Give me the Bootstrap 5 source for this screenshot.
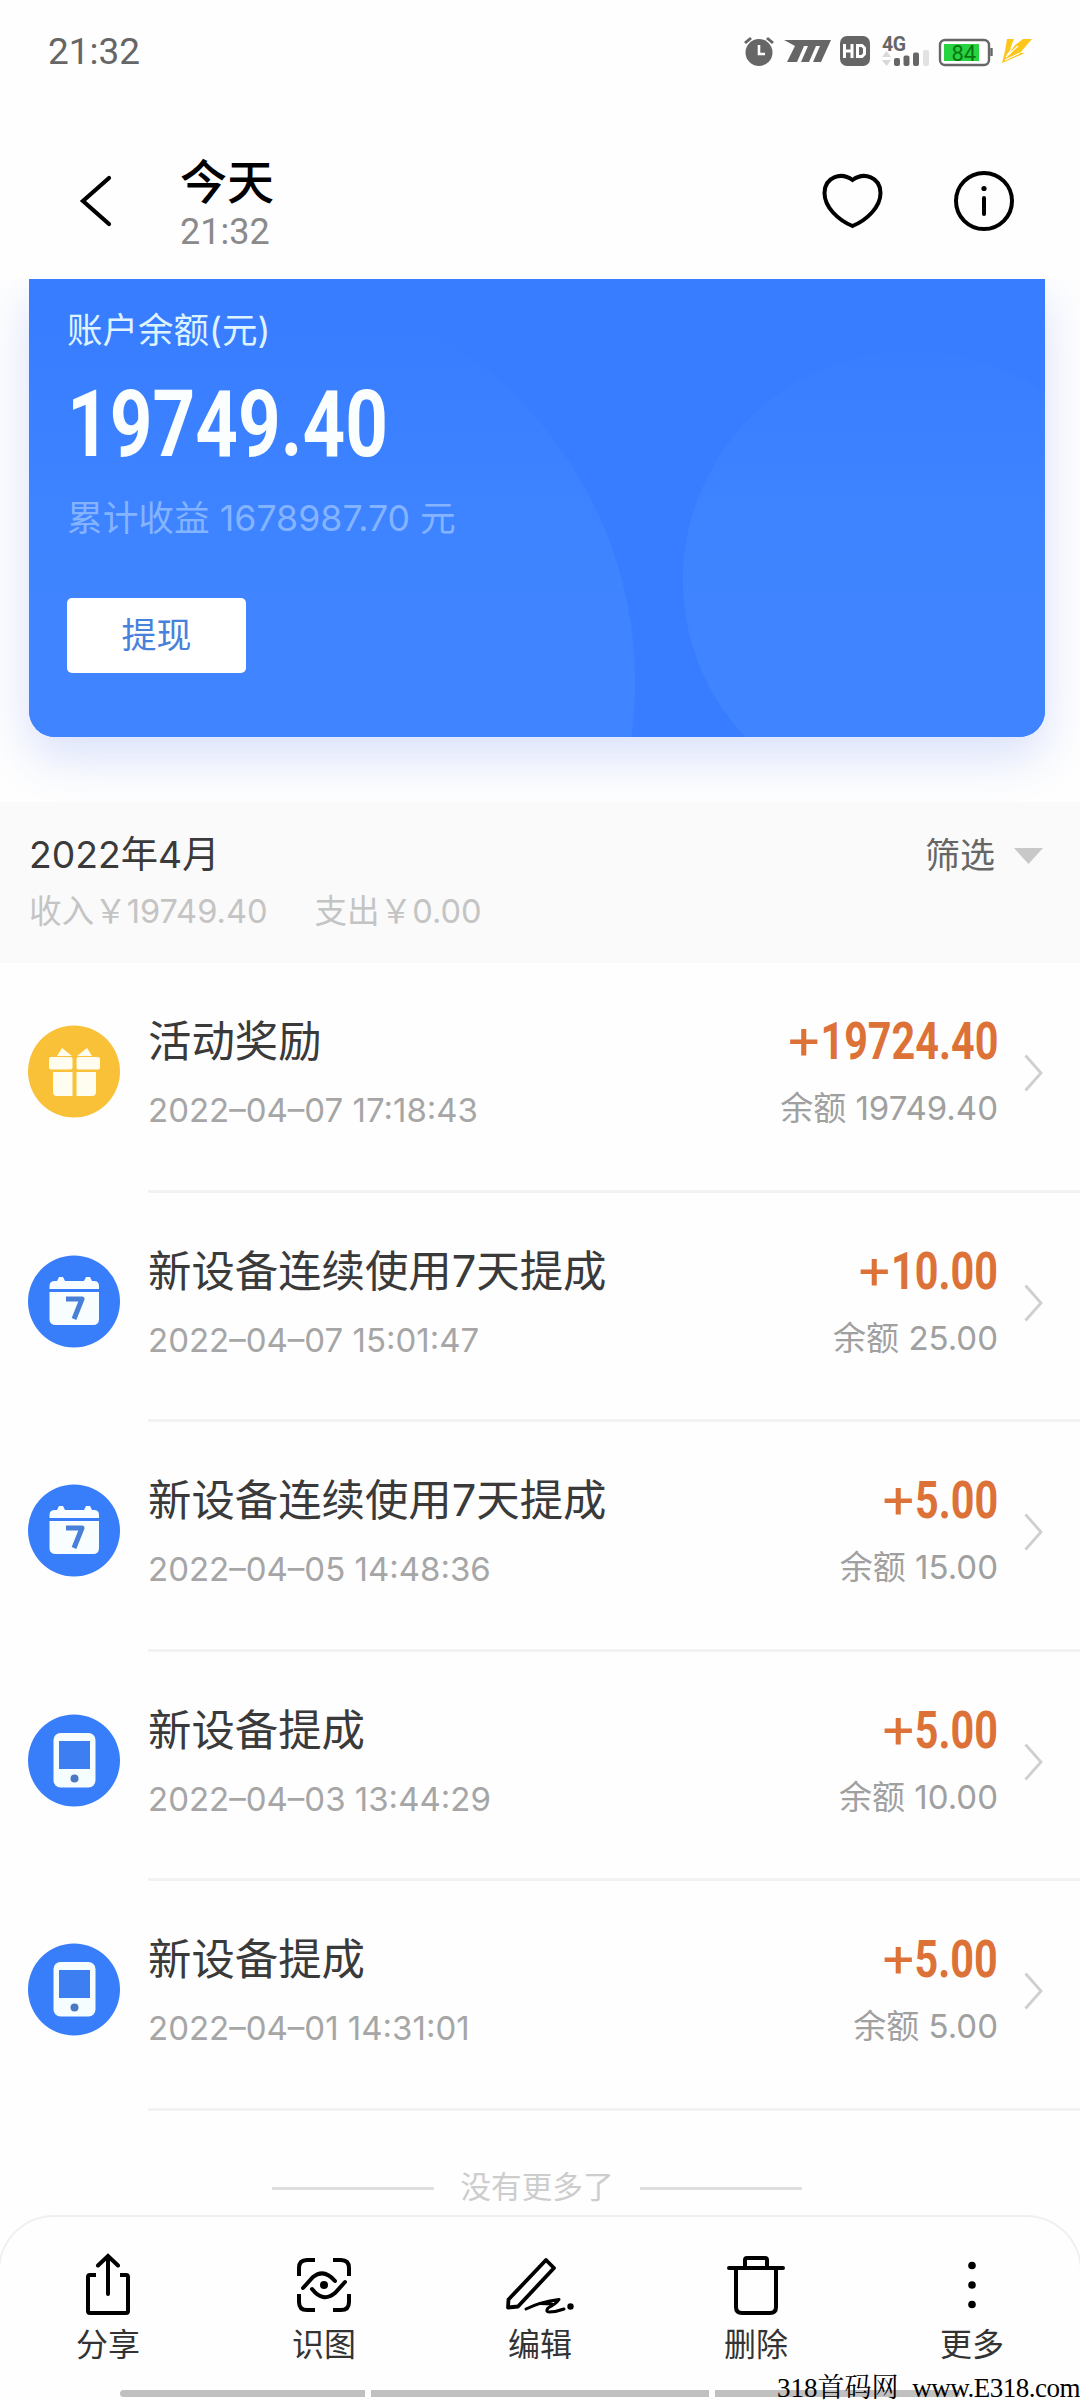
<!DOCTYPE html>
<html lang="zh-CN">
<head>
<meta charset="utf-8">
<meta name="viewport" content="width=device-width, initial-scale=1">
<title>今天 21:32</title>
<link href="https://cdn.jsdelivr.net/npm/bootstrap@5.3.0/dist/css/bootstrap.min.css" rel="stylesheet">
<style>
  body { width: 1080px; height: 2400px; overflow: hidden; background: #fefefe; font-family: Inter, "Noto Sans CJK SC", sans-serif; line-height: 1; }
  svg { display: block; flex: none; }
  .text-line { white-space: nowrap; line-height: 1; }
  .status { height: 102px; padding: 0 47px 0 48px; }
  .clock { font: 400 37px/1 Roboto, sans-serif; color: #666; }
  .topbar { height: 177px; padding: 0 65px 0 79px; }
  .back { margin-top: 73px; }
  .heading { padding: 56px 0 0 67px; gap: 9px; }
  .actions { margin-top: 67px; }
  .day { font-size: 47px; font-weight: 500; color: #000; }
  .day-time { font: 400 36px/1 Roboto, sans-serif; color: #8a8a8a; }
  .viewer { height: 523px; overflow: hidden; padding: 0 35px 0 29px; }
  .balance { position: relative; height: 458px; border-radius: 0 0 26px 26px; background: #387dff; box-shadow: 0 20px 48px rgba(70,110,240,.20); padding: 0 38px; }
  .balance > svg { position: absolute; left: 0; top: 0; border-radius: 0 0 26px 26px; }
  .balance > div { position: relative; }
  .bal-label { font-size: 35.5px; color: #dff3ff; padding-top: 34px; }
  .bal-num { font: 700 92px/1 Roboto, sans-serif; color: #fafeff; transform-origin: 0 50%; transform: scaleX(.81); margin-top: 30px; }
  .bal-total { font-size: 35.7px; color: #84b3ff; margin-top: 30px; }
  .bal-btn { width: 179px; height: 75px; border-radius: 5px; background: #fefffe; color: #4881dc; font-size: 35px; margin-top: 62px; border: 0; }
  .month { height: 161px; background: #fafafa; padding: 34px 37px 0 29px; }
  .month-name { font-size: 37.3px; color: #3a3a3a; }
  .month-sum { font-size: 32.600px; color: #c4c4c4; gap: 47px; margin-top: 22px; }
  .filter { font-size: 35px; color: #666; gap: 19px; padding-top: 2px; }
  .entry { height: 229.5px; padding-left: 28px; }
  .entry-icon { margin: 62px 28px 0 0; }
  .entry-body { height: 229.5px; border-bottom: 3px solid #f2f2f2; padding: 56px 37px 0 0; }
  .entry-name { font-size: 43.4px; color: #3a3a3a; padding-top: 1px; }
  .entry-date { font-size: 33px; color: #a6a6a6; margin-top: 31px; }
  .amount { font: 700 52px/1 Roboto, sans-serif; color: #dd7238; transform-origin: 100% 50%; transform: scaleX(.795); margin-top: -3px; }
  .amount span { display: inline-block; font-weight: 400; transform-origin: 100% 65%; transform: scaleX(1.35); margin-right: 1px; }
  .remain { font-size: 33px; color: #a0a0a0; margin-top: 24px; }
  .next { margin: 35px 0 0 26px; }
  .finish { height: 104px; gap: 27px; padding-top: 52px; padding-right: 6px; color: #cdcdcd; font-size: 30.6px; }
  .finish i { width: 162px; height: 3px; background: #dedede; margin-top: 24px; }
  .finish span { padding-top: 9px; }
  .toolbar { width: 1084px; height: 186px; border: 2px solid #f0f0f0; border-bottom: 0; border-radius: 56px 56px 0 0; background: #fefefe; margin-left: -2px; }
  .tool { width: 216px; font-size: 32px; color: #333; padding-top: 35px; gap: 11px; }
  .homebar { position: absolute; left: 120px; top: 2390px; gap: 6px; }
  .homebar i { height: 7px; background: #c0c0c0; }
  .stamp { position: absolute; left: 777px; top: 2375px; font: 27px/1 "Liberation Serif", "Noto Serif CJK SC", "Noto Sans CJK SC", serif; color: #000; }
  .stamp span { letter-spacing: -.5px; margin-left: 7px; }
</style>
</head>
<body class="position-relative">
<header>
  <div class="status d-flex align-items-center justify-content-between">
    <div class="clock text-line">21:32</div>
    <svg width="290" height="36" viewBox="743 33 290 36">
      <g fill="#666"><circle cx="759" cy="52.500" r="13.500"/><path d="M744 42l6-5 2 2-6 5zM766 39l2-2 6 5-2 2z"/>
      <path d="M784 40H831L821 62H813L820 46H816L809 62H801L808 46H804L797 62H787L795 46z"/>
      <rect x="840" y="36" width="30" height="30" rx="7"/></g>
      <path d="M759 45V54H765" fill="none" stroke="#fff" stroke-width="2.600"/>
      <path d="M844.500 44V58M852 44V58M844.500 51H852M857.500 45.500V56.500H862L864.500 54V48L862 45.500Z" fill="none" stroke="#fff" stroke-width="3"/>
      <text x="882" y="50.500" font-family="Roboto" font-weight="700" font-size="19.500" fill="#666" textLength="24">4G</text>
      <path d="M882 57l4.500-6 4.500 6zM882 60l4.500 6 4.500-6z" fill="#d8d8d8"/>
      <g fill="#666"><rect x="894" y="58" width="6" height="8" rx="2"/><rect x="903.500" y="55.500" width="6" height="10.500" rx="2"/><rect x="913" y="52.500" width="6" height="13.500" rx="2"/></g>
      <rect x="923" y="50" width="6" height="16" rx="2" fill="#e2e2e2"/>
      <rect x="940" y="40" width="49" height="25" rx="5" fill="#fff" stroke="#666" stroke-width="2.400"/><path d="M991.500 48v8" stroke="#666" stroke-width="2.400"/>
      <rect x="944" y="44" width="35" height="17" fill="#27d340"/>
      <text x="951.500" y="60.500" font-family="Roboto" font-size="22" fill="#0b7515">84</text>
      <path d="M1007 39H1014L1010 49L1023 39H1032L1020 53H1025L1002 63L1005 51z" fill="#fcc61a"/><path d="M1015 44L1006 57L1018 46M1005 60L1020 53" fill="none" stroke="#fff" stroke-width="1.200"/>
    </svg>
  </div>
  <div class="topbar d-flex align-items-start">
    <svg class="back" width="34" height="52" viewBox="79 175 34 52"><path d="M109 178L83 201L109 224" fill="none" stroke="#000" stroke-width="4.200" stroke-linecap="round"/></svg>
    <div class="heading d-flex flex-column flex-grow-1">
      <div class="day text-line">今天</div>
      <div class="day-time text-line">21:32</div>
    </div>
    <svg class="actions" width="196" height="64" viewBox="819 169 196 64"><g fill="none" stroke="#000" stroke-width="4"><path d="M852.500 180C841 171.500 824.500 177 824.500 193C824.500 207 838 220 852.500 226C867 220 880.500 207 880.500 193C880.500 177 864 171.500 852.500 180Z"/><circle cx="984" cy="201" r="28"/><path d="M984 198V214" stroke-linecap="round"/></g><circle cx="984" cy="188.500" r="2.600"/></svg>
  </div>
</header>
<main>
  <section class="viewer">
    <div class="balance d-flex flex-column align-items-start">
      <svg width="1016" height="458" viewBox="29 279 1016 458"><defs><linearGradient id="g" gradientUnits="userSpaceOnUse" x1="0" y1="310" x2="0" y2="600"><stop offset="0" stop-color="#387dff"/><stop offset="1" stop-color="#4085ff"/></linearGradient></defs><g fill="url(#g)"><circle cx="233" cy="682" r="402"/><circle cx="912" cy="580" r="229"/></g></svg>
      <div class="bal-label text-line">账户余额(元)</div>
      <div class="bal-num text-line">19749.40</div>
      <div class="bal-total text-line">累计收益 1678987.70 元</div>
      <button class="bal-btn btn p-0 position-relative text-line">提现</button>
    </div>
  </section>
  <section class="month d-flex justify-content-between align-items-start">
    <div>
      <div class="month-name text-line">2022年4月</div>
      <div class="month-sum d-flex text-line"><span>收入￥19749.40</span><span>支出￥0.00</span></div>
    </div>
    <div class="filter d-flex align-items-center text-line">筛选 <svg width="29" height="16" viewBox="0 0 29 16"><path d="M0 0H29L14.500 16z" fill="#c8c8c8"/></svg></div>
  </section>
  <section id="entries"></section>
  <div class="finish d-flex justify-content-center align-items-start"><i></i><span class="text-line">没有更多了</span><i></i></div>
</main>
<nav class="toolbar d-flex justify-content-center">
  <div class="tool d-flex flex-column align-items-center flex-shrink-0"><svg width="70" height="66" viewBox="73 2252 70 66" fill="none" stroke="#000" stroke-width="4"><path d="M96 2275H90Q88 2275 88 2277V2311Q88 2313 90 2313H126Q128 2313 128 2311V2277Q128 2275 126 2275H120"/><path d="M108 2294V2256M98 2265.500L108 2256L118 2265.500" stroke-linecap="round"/></svg><span class="text-line">分享</span></div>
  <div class="tool d-flex flex-column align-items-center flex-shrink-0"><svg width="70" height="66" viewBox="289 2252 70 66" fill="none" stroke="#000" stroke-width="4"><path d="M299 2276V2268Q299 2260 307 2260H315M333 2260H341Q349 2260 349 2268V2276M349 2294V2302Q349 2310 341 2310H333M315 2310H307Q299 2310 299 2302V2294"/><path d="M303 2288L313 2277Q324 2268 335 2281M312 2289Q323 2303 335 2293L345 2282" stroke-linecap="round"/><circle cx="324" cy="2285" r="4" fill="#000" stroke="none"/></svg><span class="text-line">识图</span></div>
  <div class="tool d-flex flex-column align-items-center flex-shrink-0"><svg width="70" height="66" viewBox="505 2252 70 66" fill="none" stroke="#000" stroke-width="3.800" stroke-linejoin="round" stroke-linecap="round"><path d="M508 2307.500L508.500 2299.500L546 2260L554 2268L518 2306.500Z"/><path d="M526 2309Q540 2302 559 2299.500Q556 2304 548 2308Q545 2312 549 2312Q556 2312 564 2309M540 2303.500L552 2304" stroke-width="3"/><circle cx="570.500" cy="2306.500" r="3.200" fill="#000" stroke="none"/></svg><span class="text-line">编辑</span></div>
  <div class="tool d-flex flex-column align-items-center flex-shrink-0"><svg width="70" height="66" viewBox="721 2252 70 66" fill="none" stroke="#000" stroke-width="4" stroke-linecap="round"><path d="M729 2268H783M745 2267V2260Q745 2258 747 2258H765Q767 2258 767 2260V2267M736 2269V2307Q736 2313 742 2313H770Q776 2313 776 2307V2269"/></svg><span class="text-line">删除</span></div>
  <div class="tool d-flex flex-column align-items-center flex-shrink-0"><svg width="70" height="66" viewBox="937 2252 70 66"><circle cx="972" cy="2265.500" r="3.800"/><circle cx="972" cy="2285" r="3.800"/><circle cx="972" cy="2304.500" r="3.800"/></svg><span class="text-line">更多</span></div>
</nav>
<div class="homebar d-flex"><i class="rounded-start-pill" style="width:245px"></i><i style="width:338px"></i><i class="rounded-end-pill" style="width:245px"></i></div>
<div class="stamp text-line">318首码网 <span>www.E318.com</span></div>
<script>
  const icons = {
    gift: '<circle cx="46" cy="46.500" r="46" fill="#f8c137"/><g fill="#fffdf0"><path d="M29 31L34 23L44 31zM64 31L59 23L49 31z"/><rect x="21" y="32" width="23.500" height="12.500" rx="2"/><rect x="48.500" y="32" width="23.500" height="12.500" rx="2"/><path d="M25 47H44.500V71H29Q25 71 25 67zM48.500 47H68V67Q68 71 64 71H48.500z"/></g>',
    cal: '<circle cx="46" cy="46.500" r="46" fill="#387dfa"/><g fill="#f8feff"><path d="M21.500 34V31Q21.500 26 27 26H29L31 22H35L37 26H56L58 22H62L64 26H66Q71 26 71 31V34z"/><path d="M21.500 37H71V64Q71 70 65 70H28Q21.500 70 21.500 64z"/></g><path d="M38 44H54L46 64" fill="none" stroke="#4a7fd8" stroke-width="5" stroke-linejoin="round"/>',
    phone: '<circle cx="46" cy="46.500" r="46" fill="#387dfa"/><rect x="25.500" y="19" width="42" height="54.500" rx="7" fill="#f6fdff"/><path d="M31 27H62V55H31z" fill="#3d7ef3"/><circle cx="46.500" cy="64.500" r="4" fill="#4b79c4"/>'
  };
  const rows = [
    ['gift', '活动奖励', '2022–04–07 17:18:43', '19724.40', '19749.40'],
    ['cal', '新设备连续使用7天提成', '2022–04–07 15:01:47', '10.00', '25.00'],
    ['cal', '新设备连续使用7天提成', '2022–04–05 14:48:36', '5.00', '15.00'],
    ['phone', '新设备提成', '2022–04–03 13:44:29', '5.00', '10.00'],
    ['phone', '新设备提成', '2022–04–01 14:31:01', '5.00', '5.00']
  ];
  document.getElementById('entries').innerHTML = rows.map(r => `
    <div class="entry d-flex align-items-start">
      <svg class="entry-icon" width="92" height="93" viewBox="0 0 92 93">${icons[r[0]]}</svg>
      <div class="entry-body d-flex flex-grow-1 align-items-start">
        <div class="flex-grow-1"><div class="entry-name text-line">${r[1]}</div><div class="entry-date text-line">${r[2]}</div></div>
        <div class="text-end"><div class="amount text-line"><span>+</span>${r[3]}</div><div class="remain text-line">余额 ${r[4]}</div></div>
        <svg class="next" width="19" height="38" viewBox="0 0 19 38"><path d="M1.500 1.500L17 19L1.500 36.500" fill="none" stroke="#cfcfcf" stroke-width="2.800"/></svg>
      </div>
    </div>`).join('');
</script>
<script src="https://cdn.jsdelivr.net/npm/bootstrap@5.3.0/dist/js/bootstrap.bundle.min.js"></script>
</body>
</html>
